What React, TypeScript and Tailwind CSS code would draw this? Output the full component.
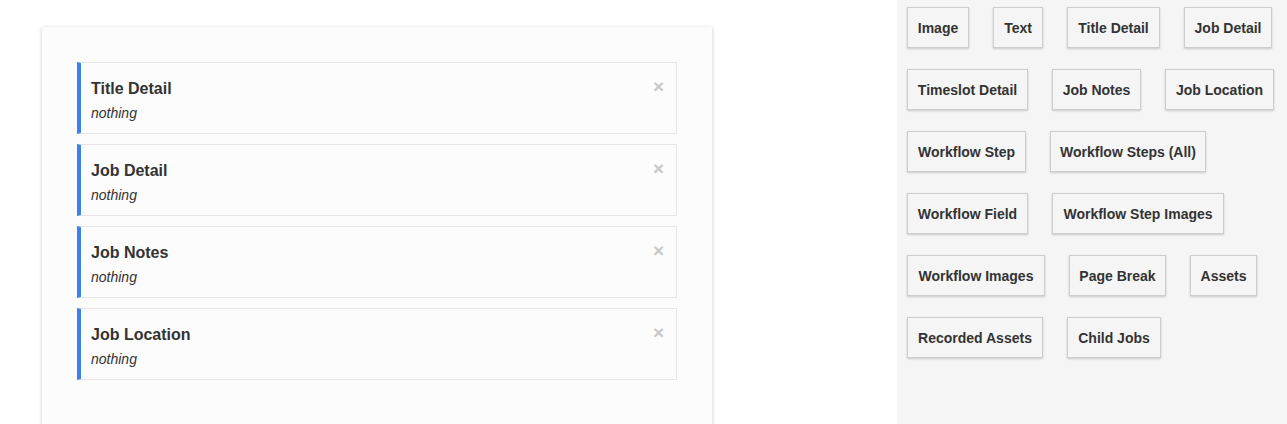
import React from "react";

const items = ["Title Detail", "Job Detail", "Job Notes", "Job Location"];
const buttons: [string, string][] = [
  ["Image", "w-[62px]"],
  ["Text", "w-[50px]"],
  ["Title Detail", "w-[93px]"],
  ["Job Detail", "w-[88px]"],
  ["Timeslot Detail", "w-[121px]"],
  ["Job Notes", "w-[89px]"],
  ["Job Location", "w-[109px]"],
  ["Workflow Step", "w-[119px]"],
  ["Workflow Steps (All)", "w-[156px]"],
  ["Workflow Field", "w-[121px]"],
  ["Workflow Step Images", "w-[172px]"],
  ["Workflow Images", "w-[138px]"],
  ["Page Break", "w-[97px]"],
  ["Assets", "w-[67px]"],
  ["Recorded Assets", "w-[136px]"],
  ["Child Jobs", "w-[94px]"],
];

export default function App() {
  return (
    <div
      className="flex h-[424px] w-[1287px] overflow-hidden bg-white text-[#333]"
      style={{ fontFamily: '"Liberation Sans", Arial, Helvetica, sans-serif' }}
    >
      <div className="w-[897px] shrink-0">
        <div className="ml-[42px] mt-[27px] h-[420px] w-[670px] bg-[#fcfcfc] px-[35px] pt-[35px] shadow-[0_1px_4px_rgba(0,0,0,0.22)]">
          <div className="flex flex-col gap-[10px]">
            {items.map((t) => (
              <div
                key={t}
                className="flex h-[72px] items-start justify-between border border-l-4 border-[#e6e6e6] border-l-[#3b82f0] bg-[#fcfcfc] pl-[10px] pr-[12px] pt-[15px]"
              >
                <div>
                  <div className="text-[16px] font-bold leading-[22px] text-[#333]">{t}</div>
                  <div className="mt-[3px] text-[14px] italic leading-[20px] text-[#333]">nothing</div>
                </div>
                <div className="text-[19px] font-bold leading-[18px] text-[#c8c8c8]">×</div>
              </div>
            ))}
          </div>
        </div>
      </div>
      <div className="h-full w-[390px] shrink-0 bg-[#f5f5f5] pl-[10px] pt-[7px]">
        <div className="flex flex-wrap gap-x-[24px] gap-y-[21px]">
          {buttons.map(([b, w]) => (
            <div
              key={b}
              className={`flex h-[41px] items-center justify-center whitespace-nowrap border border-[#cdcdcd] bg-[#f5f5f5] pt-[2px] text-[14px] font-bold text-[#333] shadow-[0_1px_2px_rgba(0,0,0,0.18)] ${w}`}
            >
              {b}
            </div>
          ))}
        </div>
      </div>
    </div>
  );
}
